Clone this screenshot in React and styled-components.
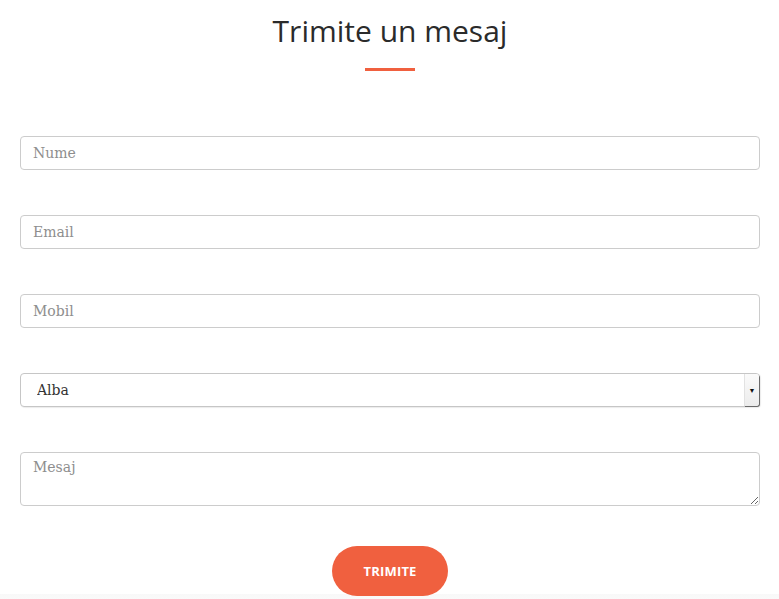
import styled, { createGlobalStyle } from "styled-components";

const Global = createGlobalStyle`
  html, body {
    margin: 0;
    padding: 0;
    background: #ffffff;
  }
  body {
    font-family: "Open Sans", "Liberation Sans", sans-serif;
    overflow: hidden;
  }
`;

const Section = styled.section`
  padding: 0 19px 0 20px;
  background: #ffffff;
`;

const Title = styled.h1`
  margin: 13px 0 0;
  font-family: "Open Sans", "Liberation Sans", sans-serif;
  font-size: 30px;
  line-height: 36px;
  font-weight: 400;
  color: #2b2b2b;
  text-align: center;
`;

const Underline = styled.div`
  width: 50px;
  height: 3px;
  margin: 19px auto 0;
  background: #f0603f;
`;

const Form = styled.form`
  display: flex;
  flex-direction: column;
  gap: 45px;
  margin-top: 65px;
`;

const fieldBase = `
  box-sizing: border-box;
  width: 100%;
  border: 1px solid #cccccc;
  border-radius: 4px;
  background: #ffffff;
  font-family: "DejaVu Serif", "Liberation Serif", serif;
  font-size: 14px;
  color: #333333;
  outline: none;
  &::placeholder {
    color: #8e8e8e;
  }
`;

const Input = styled.input`
  ${fieldBase}
  height: 34px;
  padding: 0 12px;
`;

const SelectWrap = styled.div`
  position: relative;
  height: 34px;
`;

const Select = styled.select`
  ${fieldBase}
  height: 34px;
  padding: 0 20px 0 16px;
  appearance: none;
  -webkit-appearance: none;
  border-color: #c6c6c6;
  box-shadow: 1px 1px 1px rgba(0, 0, 0, 0.08);
`;

const Arrow = styled.span`
  position: absolute;
  top: 1px;
  right: 1px;
  width: 14px;
  height: 32px;
  display: flex;
  align-items: center;
  justify-content: center;
  background: linear-gradient(#fafafa, #ececec);
  border-left: 1px solid #e2e2e2;
  box-shadow: 1px 1px 0 #6a6a6a;
  border-radius: 0 3px 3px 0;
  font-size: 7px;
  color: #111111;
  pointer-events: none;
`;

const TextArea = styled.textarea`
  ${fieldBase}
  height: 54px;
  padding: 6px 12px;
  resize: vertical;
  display: block;
`;

const ButtonRow = styled.div`
  display: flex;
  justify-content: center;
  margin-top: -5px;
  margin-bottom: -2px;
  position: relative;
  z-index: 1;
`;

const Button = styled.button`
  width: 116px;
  height: 50px;
  border: none;
  border-radius: 25px;
  background: #f0603f;
  color: #ffffff;
  font-family: "Open Sans", "Liberation Sans", sans-serif;
  font-size: 13px;
  font-weight: 700;
  letter-spacing: 0.2px;
  cursor: pointer;
`;

const NextSection = styled.section`
  height: 5px;
  background: linear-gradient(#f8f8f8, #fafafa);
`;

export default function App() {
  return (
    <>
      <Global />
      <Section>
        <Title>Trimite un mesaj</Title>
        <Underline />
        <Form onSubmit={(e) => e.preventDefault()}>
          <Input type="text" placeholder="Nume" />
          <Input type="email" placeholder="Email" />
          <Input type="tel" placeholder="Mobil" />
          <SelectWrap>
            <Select defaultValue="Alba">
              <option>Alba</option>
              <option>Arad</option>
              <option>Argeș</option>
              <option>Bacău</option>
              <option>București</option>
            </Select>
            <Arrow>▼</Arrow>
          </SelectWrap>
          <TextArea placeholder="Mesaj" />
          <ButtonRow>
            <Button type="submit">TRIMITE</Button>
          </ButtonRow>
        </Form>
      </Section>
      <NextSection />
    </>
  );
}
